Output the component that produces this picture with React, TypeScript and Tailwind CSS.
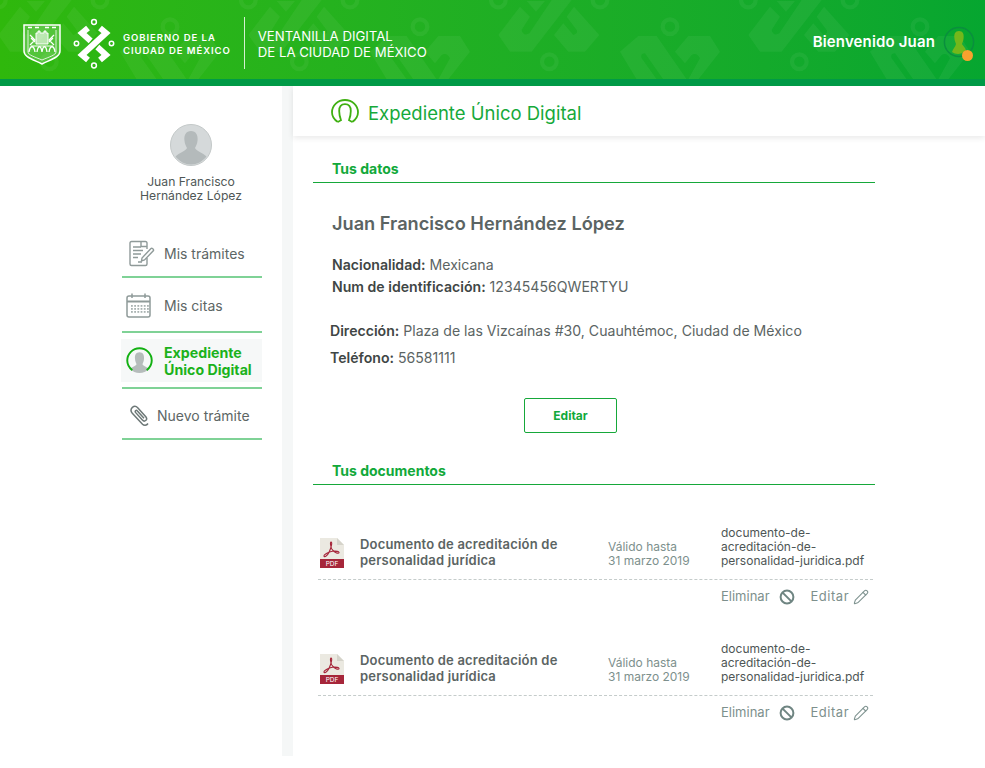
import type { ReactNode } from "react";
import { Pencil } from "lucide-react";

const FONT = "font-['Inter','Noto_Sans',sans-serif]";

function HeaderPattern() {
  const offsets = [-320, -70, 180, 430, 680, 930];
  return (
    <svg className="absolute inset-0 h-[79px] w-full" fill="none">
      {offsets.map((x) => (
        <g key={x} transform={`translate(${x} 0) scale(0.3333)`}>
          <g fill="#fff" fillOpacity="0.05">
            <path d="M205 105L270 20L300 50L275 90Q280 110 298 100L365 0H425L305 155H240Z" />
            <path d="M372 105L400 70L430 105Q445 100 440 90L410 50L432 20L508 105L465 155H415Z" />
            <path d="M290 3H345L318 35Z" />
            <path d="M570 155L625 108H680L770 238H700L645 160Q630 160 635 175L680 238H620Z" />
            <path d="M735 155L775 108H840L870 155L805 238H775L810 175Q800 155 785 165L765 190Z" />
          </g>
          <g stroke="#fff" strokeOpacity="0.05" strokeWidth="13">
            <circle cx="720" cy="80" r="22" />
            <circle cx="358" cy="185" r="22" />
            <circle cx="510" cy="0" r="22" />
            <circle cx="205" cy="0" r="22" />
          </g>
        </g>
      ))}
    </svg>
  );
}

function Shield() {
  return (
    <svg width="38" height="41" viewBox="0 0 38 41" fill="none" stroke="#fff">
      <path d="M1 1H37V27C37 33 29 35 19 40C9 35 1 33 1 27Z" strokeWidth="1.5" fill="#fff" fillOpacity="0.18" />
      <path d="M5 3.5H9M12 3.5H16M22 3.5H26M29 3.5H33" strokeWidth="1.4" />
      <path d="M5 6V28C5 31 12 33 19 36C26 33 33 31 33 28V6" strokeWidth="0.8" />
      <path d="M13 20V9H15V7H17V9H21V7H23V9H25V20Z" strokeWidth="1" fill="#fff" fillOpacity="0.6" />
      <path d="M7 11L12 16L7 21M31 11L26 16L31 21M8 14L12 18M30 14L26 18" strokeWidth="1.2" />
      <path d="M6 28C7 21 11 21 12 28M14 28C15 21 18 21 19 28M19 28C20 21 23 21 24 28M26 28C27 21 31 21 32 28" strokeWidth="1.3" />
      <path d="M8 22H30" strokeWidth="1" />
    </svg>
  );
}

function CdmxLogo() {
  return (
    <svg width="44" height="52" viewBox="0 0 44 52" fill="none" stroke="#fff">
      <circle cx="21" cy="4" r="2.4" strokeWidth="1.5" />
      <circle cx="21" cy="47.5" r="2.4" strokeWidth="1.5" />
      <circle cx="3.5" cy="25.5" r="2.2" strokeWidth="1.5" />
      <circle cx="38.5" cy="25.5" r="2.2" strokeWidth="1.5" />
      <path d="M15 10L9 15L33 37L27 42" strokeWidth="6" />
      <path d="M14.5 33.5L27.5 18.5" stroke="#2bb60e" strokeWidth="9" />
      <path d="M27 10L33 15L9 37L15 42" strokeWidth="6" />
    </svg>
  );
}

function DocIcon() {
  return (
    <svg width="26" height="27" viewBox="0 0 26 27" fill="none" stroke="#8f9a99" strokeWidth="1.4">
      <path d="M18 9V3C18 2 17 1.5 16.5 1.5H2.5C1.5 1.5 1 2 1 3V24C1 25 1.5 25.5 2.5 25.5H16.5C17.5 25.5 18 25 18 24V18" />
      <path d="M4 7H12M4 10.5H14M4 14H12M4 17.5H9M9 22H13" />
      <path d="M13 18L12.5 21L15.5 20L24.5 10.5C25 9.5 23 7.5 22 8.5Z" />
      <path d="M12 2V6.5H18" />
    </svg>
  );
}

function CalendarIcon() {
  const dots = [];
  for (let y = 12; y <= 20; y += 3) {
    for (let x = 5; x <= 21; x += 3.2) {
      dots.push(<rect key={`${x}-${y}`} x={x} y={y} width="1.8" height="1.8" fill="#a9b2b1" stroke="none" />);
    }
  }
  return (
    <svg width="25" height="25" viewBox="0 0 25 25" fill="none" stroke="#8f9a99" strokeWidth="1.5">
      <rect x="1" y="3" width="23" height="21" rx="2" />
      <path d="M1 8.5H24" strokeWidth="2" />
      <path d="M6 0.5V5M19 0.5V5" />
      {dots}
    </svg>
  );
}

function ClipIcon() {
  return (
    <svg width="20" height="22" viewBox="0 0 20 22" fill="none" stroke="#6d7877" strokeWidth="1.5">
      <path d="M18 18.5C16.5 20.8 14 20.8 12.5 19.3L2.3 8.2C0.6 6.2 0.8 3.9 2.4 2.4C4 1 6.2 1.1 7.7 2.8L16 12C17 13.4 16.7 14.7 15.7 15.5C14.7 16.3 13.4 16.2 12.4 15.1L5.5 7.4C5 6.6 5.2 6 5.7 5.6C6.2 5.2 6.9 5.3 7.4 5.9L14 13.2" />
    </svg>
  );
}

function PersonRing() {
  return (
    <svg width="27" height="27" viewBox="0 0 28 28" fill="none">
      <path d="M14 5.5C17.6 5.5 19 8.5 18.7 12C18.5 15 17.6 16.6 17 18C18 20 21.5 21 23.5 22.5C21 25.5 18 27 14 27C10 27 7 25.5 4.5 22.5C6.5 21 10 20 11 18C10.4 16.6 9.5 15 9.3 12C9 8.5 10.4 5.5 14 5.5Z" fill="#b5bcbb" />
      <path d="M6.5 24C3.3 21.5 1.3 18 1.3 14C1.3 7 7 1.3 14 1.3C21 1.3 26.7 7 26.7 14C26.7 18 24.7 21.5 21.5 24" stroke="#12b012" strokeWidth="2" />
    </svg>
  );
}

function OmegaIcon() {
  return (
    <svg width="28" height="24" viewBox="0 0 28 24" fill="none" stroke="#3fb012" strokeWidth="1.8">
      <path d="M6.8 23L10 21.2C8.8 18 8.2 15.5 8.2 12C8.2 7.6 10.6 5.2 14 5.2C17.4 5.2 19.8 7.6 19.8 12C19.8 15.5 19.2 18 18 21.2L21.2 23" />
      <path d="M6.8 23C3.2 20.5 1 17 1 13.2C1 6.4 6.8 1 14 1C21.2 1 27 6.4 27 13.2C27 17 24.8 20.5 21.2 23" />
    </svg>
  );
}

function AvatarBig() {
  return (
    <svg width="42" height="42" viewBox="0 0 42 42" className="shrink-0">
      <circle cx="21" cy="21" r="20.5" fill="#d5d9da" stroke="#c3c8c8" />
      <path d="M21 7C26 7 28 11 27.6 16C27.3 20 26 22 25 24C26 27 33 29 36.5 32.5C32.5 37.5 27 40.5 21 40.5C15 40.5 9.5 37.5 5.5 32.5C9 29 16 27 17 24C16 22 14.7 20 14.4 16C14 11 16 7 21 7Z" fill="#b4babb" />
    </svg>
  );
}

function UserBadge() {
  return (
    <div className="relative h-[32px] w-[32px]">
      <svg width="32" height="32" viewBox="0 0 32 32" fill="none">
        <circle cx="16" cy="16" r="14.6" stroke="#0a8f3e" strokeWidth="1.5" />
        <path d="M16 5C20 5 21 8 20.6 12C20.4 15 19.5 16.5 19 18C20 20 23 22 23 25C20 27 17 28 15 28C13 28 10.5 27 9 26C10 23 12.5 20.5 13 18C12.5 16.5 11.6 15 11.4 12C11 8 12 5 16 5Z" fill="#74b71b" />
      </svg>
      <span className="absolute right-[2px] bottom-[-3px] h-[11px] w-[11px] rounded-full bg-[#f9a12e]" />
    </div>
  );
}

function PdfIcon() {
  return (
    <svg width="26" height="32" viewBox="0 0 26 32">
      <path d="M1 1H18L25 8V31H1Z" fill="#ebe9e1" />
      <path d="M18 1L25 8H18Z" fill="#d5d3ca" />
      <rect x="1" y="22" width="24" height="9" fill="#a6263a" />
      <path d="M12 5C13.5 5 12.5 10 10 15.5C8.5 18.5 5.5 20.5 5 19.3C4.5 18 9 15 13.5 14.3C17 13.8 20.5 14.5 20 15.8C19.5 17 15 15.5 12.8 12C11.5 9.5 11 5 12 5Z" fill="none" stroke="#a6263a" strokeWidth="1.1" />
      <text x="13" y="29" textAnchor="middle" fontSize="6.5" fill="#fff" fontFamily="Inter, sans-serif">PDF</text>
    </svg>
  );
}

function BanIcon() {
  return (
    <svg width="16" height="16" viewBox="0 0 16 16" fill="none" stroke="#6f8582" strokeWidth="2">
      <circle cx="8" cy="8" r="6.4" />
      <path d="M3.6 3.6L12.4 12.4" />
    </svg>
  );
}

function DocumentRow() {
  return (
    <div className="mb-[28px]">
      <div className="ml-[5px] flex h-[54px] w-[555px] items-start border-b border-dashed border-[#c5cccb]">
        <div className="ml-[1px] w-[41px] shrink-0 pt-[11px]"><PdfIcon /></div>
        <div className="w-[248px] shrink-0 pt-[10px] text-[13px] leading-[16px] font-semibold tracking-[0.015em] text-[#5b6463]">
          Documento de acreditación de<br />personalidad jurídica
        </div>
        <div className="w-[113px] shrink-0 pt-[14px] text-[12px] leading-[14px] text-[#7d908d]">
          Válido hasta<br />31 marzo 2019
        </div>
        <div className="text-[12px] leading-[14px] text-[#4e5655]">
          documento-de-<br />acreditación-de-<br />personalidad-juridica.pdf
        </div>
      </div>
      <div className="ml-[5px] flex h-[34px] w-[555px] items-center text-[13px] text-[#7d908d]">
        <span className="ml-[403px]">Eliminar</span>
        <span className="ml-[9px]"><BanIcon /></span>
        <span className="ml-[16px] tracking-[0.04em]">Editar</span>
        <Pencil className="ml-[4px] size-[16px] text-[#7f9390]" strokeWidth={1.6} />
      </div>
    </div>
  );
}

function SectionTitle({ children }: { children: string }) {
  return (
    <div className="h-[24px] border-b border-[#16a83a] pl-[19px] text-[14px] leading-[20px] font-bold text-[#12a93a]">
      {children}
    </div>
  );
}

function NavItem({ icon, label, className }: { icon: ReactNode; label: string; className: string }) {
  return (
    <div className={`ml-[2px] flex w-[140px] items-center border-b-2 border-[#7fd296] ${className}`}>
      {icon}
      <span className="text-[14px] text-[#5d6665]">{label}</span>
    </div>
  );
}

export default function App() {
  return (
    <div className={`${FONT} h-[768px] overflow-hidden bg-white`}>
      <header className="relative flex h-[86px] items-center border-b-[7px] border-[#009a46] bg-gradient-to-r from-[#2fb80c] to-[#06a630] pt-[9px] text-white">
        <HeaderPattern />
        <div className="relative ml-[23px]"><Shield /></div>
        <div className="relative ml-[12px]"><CdmxLogo /></div>
        <div className="relative ml-[6px] text-[9.5px] leading-[13px] font-semibold tracking-[0.1em]">
          GOBIERNO DE LA<br />CIUDAD DE MÉXICO
        </div>
        <div className="relative mb-[3px] ml-[13px] h-[52px] w-px bg-white/80" />
        <div className="relative ml-[13px] text-[13.2px] leading-[16px] font-normal">
          VENTANILLA DIGITAL<br />DE LA CIUDAD DE MÉXICO
        </div>
        <div className="relative mr-[10px] mb-[4px] ml-auto flex items-center gap-[8px]">
          <span className="text-[15px] font-semibold tracking-[0.01em]">Bienvenido Juan</span>
          <UserBadge />
        </div>
      </header>

      <div className="flex h-[670px]">
        <aside className="flex w-[282px] shrink-0 flex-col items-center pt-[38px] pl-[100px]">
          <AvatarBig />
          <p className="mt-[9px] mb-[20px] text-center text-[12.2px] leading-[14px] text-[#4f5756]">
            Juan Francisco<br />Hernández López
          </p>
          <NavItem icon={<DocIcon />} label="Mis trámites" className="h-[55px] gap-[9px] pt-[8px] pl-[7px]" />
          <NavItem icon={<CalendarIcon />} label="Mis citas" className="h-[55px] gap-[13px] pt-[2px] pl-[4px]" />
          <div className="ml-[2px] w-[140px] border-b-2 border-[#7fd296] pt-[6px] pb-[5px]">
            <div className="-ml-[1px] flex h-[43px] items-center gap-[11px] bg-[#f6f8f8] pl-[5px] text-[14.2px] leading-[17px] font-bold text-[#1bb21b]">
              <PersonRing />
              <span>Expediente<br />Único Digital</span>
            </div>
          </div>
          <NavItem icon={<ClipIcon />} label="Nuevo trámite" className="h-[51px] gap-[7px] pt-[4px] pl-[8px]" />
        </aside>

        <div className="w-[11px] shrink-0 bg-[#f5f7f7]" />

        <main className="min-w-0 flex-1">
          <div className="flex h-[50px] items-center gap-[9px] pl-[38px] shadow-[0_2px_6px_rgba(0,0,0,0.09)]">
            <OmegaIcon />
            <h1 className="pt-[5px] text-[18.5px] font-normal text-[#16a93a]">Expediente Único Digital</h1>
          </div>

          <div className="ml-[20px] w-[562px] pt-[23px]">
            <SectionTitle>Tus datos</SectionTitle>
            <h2 className="mt-[28px] pl-[19px] text-[18.2px] leading-[24px] font-semibold text-[#5b6463]">Juan Francisco Hernández López</h2>
            <div className="mt-[19px] pl-[19px] text-[14.1px] leading-[22px] text-[#5b6463]">
              <p><b className="font-semibold text-[#3f4645]">Nacionalidad:</b> Mexicana</p>
              <p><b className="font-semibold text-[#3f4645]">Num de identificación:</b> 12345456QWERTYU</p>
            </div>
            <div className="mt-[22px] pl-[17px] text-[14.1px] text-[#5b6463]">
              <p className="leading-[22px]"><b className="font-semibold text-[#3f4645]">Dirección:</b> Plaza de las Vizcaínas #30, Cuauhtémoc, Ciudad de México</p>
              <p className="mt-[5px] leading-[22px]"><b className="font-semibold text-[#3f4645]">Teléfono:</b> 56581111</p>
            </div>
            <div className="mt-[29px] pl-[211px]">
              <button type="button" className="h-[35px] w-[93px] rounded-[2px] border border-[#16a83a] text-[12px] font-bold text-[#12a93a]">Editar</button>
            </div>
            <div className="mt-[28px]"><SectionTitle>Tus documentos</SectionTitle></div>
            <div className="pt-[41px]">
              <DocumentRow />
              <DocumentRow />
            </div>
          </div>
        </main>
      </div>
    </div>
  );
}
